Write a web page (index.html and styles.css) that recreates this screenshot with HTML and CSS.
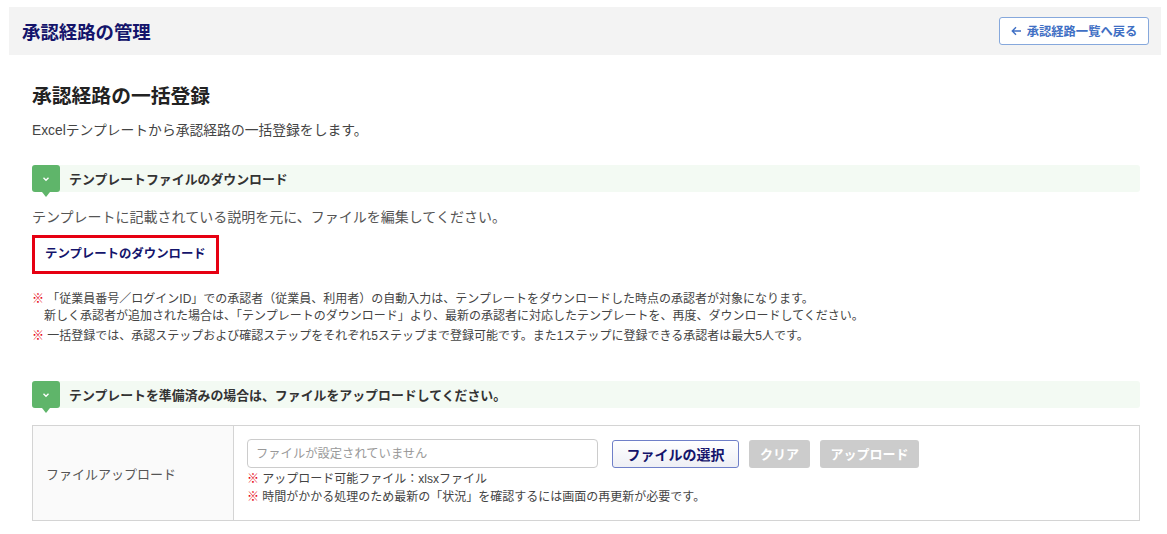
FILE: index.html
```html
<!DOCTYPE html>
<html lang="ja">
<head>
    <meta charset="UTF-8">
    <meta name="viewport" content="width=device-width, initial-scale=1">
    <title>承認経路の管理</title>
    <link rel="stylesheet" href="styles.css">
</head>
<body>

    <div class="page-header">
        <h1 class="page-title">承認経路の管理</h1>
        <a href="#" class="back-button">
            <svg class="back-arrow" width="11" height="10" viewBox="0 0 11 10"><path d="M10 5 H1.5 M5 1.3 L1.3 5 L5 8.7" fill="none" stroke="#3f6fc4" stroke-width="1.4"/></svg>
            承認経路一覧へ戻る
        </a>
    </div>

    <div class="content">
        <h2 class="content-title">承認経路の一括登録</h2>
        <p class="lead">Excelテンプレートから承認経路の一括登録をします。</p>

        <div class="section-bar">
            <span class="section-icon">
                <svg width="10" height="10" viewBox="0 0 10 10"><path d="M2.5 3.8 L5 6.2 L7.5 3.8" fill="none" stroke="#fff" stroke-width="1.4"/></svg>
            </span>
            <span class="section-text">テンプレートファイルのダウンロード</span>
        </div>

        <p class="desc">テンプレートに記載されている説明を元に、ファイルを編集してください。</p>

        <a href="#" class="download-button">テンプレートのダウンロード</a>

        <div class="notes">
            <p><span class="mark">※</span> 「従業員番号／ログインID」での承認者（従業員、利用者）の自動入力は、テンプレートをダウンロードした時点の承認者が対象になります。</p>
            <p class="indent">新しく承認者が追加された場合は、「テンプレートのダウンロード」より、最新の承認者に対応したテンプレートを、再度、ダウンロードしてください。</p>
            <p class="gap"><span class="mark">※</span> 一括登録では、承認ステップおよび確認ステップをそれぞれ5ステップまで登録可能です。また1ステップに登録できる承認者は最大5人です。</p>
        </div>

        <div class="section-bar second">
            <span class="section-icon">
                <svg width="10" height="10" viewBox="0 0 10 10"><path d="M2.5 3.8 L5 6.2 L7.5 3.8" fill="none" stroke="#fff" stroke-width="1.4"/></svg>
            </span>
            <span class="section-text">テンプレートを準備済みの場合は、ファイルをアップロードしてください。</span>
        </div>

        <div class="upload-table">
            <div class="upload-label">ファイルアップロード</div>
            <div class="upload-body">
                <div class="upload-row">
                    <input type="text" class="file-input" placeholder="ファイルが設定されていません" readonly>
                    <button class="select-button">ファイルの選択</button>
                    <button class="gray-button clear">クリア</button>
                    <button class="gray-button upload">アップロード</button>
                </div>
                <p class="upload-note"><span class="mark">※</span> アップロード可能ファイル：xlsxファイル</p>
                <p class="upload-note"><span class="mark">※</span> 時間がかかる処理のため最新の「状況」を確認するには画面の再更新が必要です。</p>
            </div>
        </div>
    </div>

</body>
</html>
```

FILE: styles.css
```css
body {
    background-color: #fff;
    font-family: "Liberation Sans", "Noto Sans CJK JP", sans-serif;
    margin: 0;
    padding: 7px 6px 0 9px;
    color: #444;
}

/* Header */
.page-header {
    display: flex;
    justify-content: space-between;
    align-items: center;
    background-color: #f3f3f3;
    height: 48px;
    padding: 0 12px 0 13px;
}

.page-title {
    margin: 0;
    font-size: 18.4px;
    font-weight: bold;
    color: #14146b;
}

.back-button {
    display: inline-flex;
    align-items: center;
    justify-content: center;
    gap: 5px;
    box-sizing: border-box;
    width: 150px;
    height: 28px;
    border: 1px solid #86a8dc;
    border-radius: 3px;
    background: #fff;
    color: #3f6fc4;
    font-size: 12.3px;
    font-weight: bold;
    text-decoration: none;
}

/* Content */
.content {
    padding: 0 21px 0 23px;
}

.content-title {
    margin: 28px 0 0;
    font-size: 19.8px;
    font-weight: bold;
    color: #222;
    line-height: 26px;
}

.lead {
    margin: 13px 0 0;
    font-size: 13.8px;
    line-height: 18px;
    color: #444;
}

.section-bar {
    display: flex;
    align-items: center;
    height: 27px;
    margin-top: 25px;
    background-color: #f3faf3;
    border-radius: 3px;
}

.section-bar.second {
    margin-top: 36px;
}

.section-icon {
    position: relative;
    display: flex;
    align-items: center;
    justify-content: center;
    width: 28px;
    height: 27px;
    background-color: #5fb56a;
    border-radius: 3px;
    margin-right: 9px;
}

.section-icon::after {
    content: "";
    position: absolute;
    bottom: -5px;
    left: 10px;
    border-left: 4px solid transparent;
    border-right: 4px solid transparent;
    border-top: 5px solid #5fb56a;
}

.section-text {
    font-size: 12.9px;
    font-weight: bold;
    color: #333;
}

.desc {
    margin: 16px 0 0;
    font-size: 14px;
    line-height: 18px;
    color: #555;
}

.download-button {
    display: inline-block;
    box-sizing: border-box;
    width: 187px;
    height: 39px;
    line-height: 33px;
    margin-top: 9px;
    border: 3px solid #e60012;
    padding-left: 10px;
    color: #14146b;
    font-size: 12.4px;
    font-weight: bold;
    text-decoration: none;
}

.notes {
    margin-top: 17px;
    font-size: 12px;
    color: #444;
}

.notes p {
    margin: 0;
    line-height: 17px;
}

.notes .indent {
    padding-left: 12px;
}

.notes .gap {
    margin-top: 3px;
}

.mark {
    color: #e60012;
}

/* Upload table */
.upload-table {
    display: flex;
    margin-top: 17px;
    border: 1px solid #d4d4d4;
    height: 94px;
}

.upload-label {
    display: flex;
    align-items: center;
    box-sizing: border-box;
    width: 201px;
    padding-left: 13px;
    background-color: #fafafa;
    border-right: 1px solid #d4d4d4;
    font-size: 13px;
    color: #555;
}

.upload-body {
    flex: 1;
    padding: 13px 0 0 13px;
}

.upload-row {
    display: flex;
    align-items: center;
    gap: 10px;
}

.file-input {
    box-sizing: border-box;
    width: 351px;
    height: 29px;
    border: 1px solid #ccc;
    border-radius: 4px;
    padding: 0 8px;
    font-family: inherit;
    font-size: 12.3px;
    margin-right: 4px;
}

.file-input::placeholder {
    color: #999;
}

.select-button {
    box-sizing: border-box;
    width: 127px;
    height: 28px;
    border: 1px solid #6f7fc8;
    border-radius: 3px;
    background: linear-gradient(#fff, #eeeff5);
    color: #14146b;
    font-family: inherit;
    font-size: 14px;
    font-weight: bold;
}

.gray-button {
    box-sizing: border-box;
    height: 28px;
    border: none;
    border-radius: 3px;
    background-color: #cccccc;
    color: #fff;
    font-family: inherit;
    font-size: 13px;
    font-weight: bold;
    padding: 0;
}

.gray-button.clear {
    width: 61px;
}

.gray-button.upload {
    width: 99px;
}

.upload-note {
    margin: 0;
    font-size: 12px;
    line-height: 18px;
    color: #444;
}

.upload-row + .upload-note {
    margin-top: 2px;
}
```
